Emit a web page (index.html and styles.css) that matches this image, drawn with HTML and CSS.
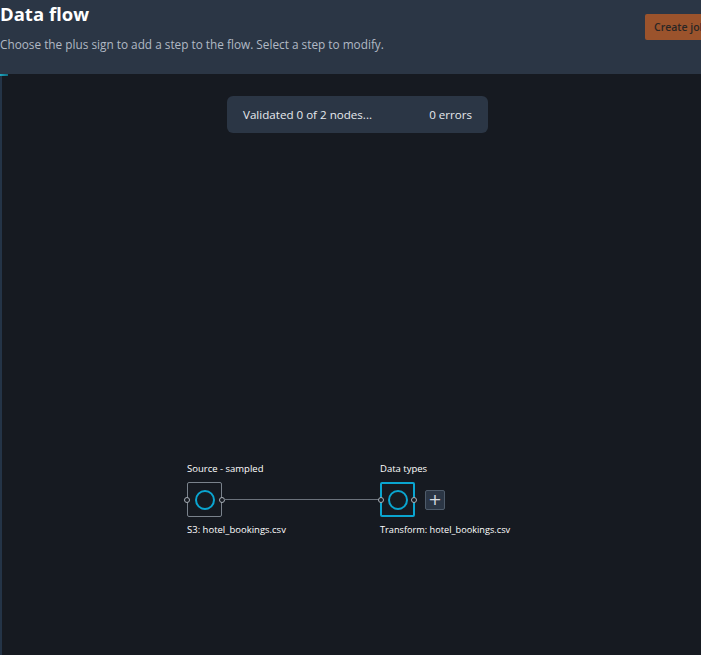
FILE: index.html
```html
<!DOCTYPE html>
<html>
<head>
<meta charset="utf-8">
<link rel="stylesheet" href="styles.css">
</head>
<body>
<div class="page">
  <header class="header">
    <div class="header-text">
      <h1 class="title">Data flow</h1>
      <p class="subtitle">Choose the plus sign to add a step to the flow. Select a step to modify.</p>
    </div>
    <button class="create-btn">Create job</button>
  </header>
  <main class="canvas">
    <div class="corner-mark"></div>
    <div class="validation">
      <span>Validated 0 of 2 nodes...</span>
      <span>0 errors</span>
    </div>

    <div class="node node-source">
      <div class="node-label">Source - sampled</div>
      <div class="node-box">
        <span class="port port-right"></span>
        <span class="port port-left"></span>
        <span class="ring"></span>
      </div>
      <div class="node-sub">S3: hotel_bookings.csv</div>
    </div>

    <div class="edge"></div>

    <div class="node node-transform">
      <div class="node-label">Data types</div>
      <div class="node-row">
        <div class="node-box selected">
          <span class="port port-left"></span>
          <span class="port port-right"></span>
          <span class="ring"></span>
        </div>
        <button class="add-btn">+</button>
      </div>
      <div class="node-sub">Transform: hotel_bookings.csv</div>
    </div>
  </main>
</div>
</body>
</html>
```

FILE: styles.css
```css
* { box-sizing: border-box; }
html, body {
  margin: 0;
  padding: 0;
  width: 701px;
  height: 655px;
  overflow: hidden;
  background: #161a21;
  font-family: "Open Sans", "Noto Sans", sans-serif;
}
.page {
  display: flex;
  flex-direction: column;
  height: 655px;
}
.header {
  height: 74px;
  background: #2b3645;
  display: flex;
  justify-content: space-between;
  align-items: flex-start;
  position: relative;
}
.title {
  margin: 0;
  padding-top: 1px;
  font-size: 18.5px;
  line-height: 25px;
  font-weight: 700;
  color: #ffffff;
}
.subtitle {
  margin: 10px 0 0 0;
  font-size: 11.8px;
  line-height: 16px;
  color: #b1b9c4;
}
.create-btn {
  margin-top: 14px;
  margin-right: -40px;
  height: 26px;
  width: 96px;
  padding: 0 0 0 9px;
  text-align: left;
  background: #9b532c;
  border: none;
  border-radius: 2px;
  color: #2a2625;
  font-family: "Open Sans", sans-serif;
  font-size: 10.5px;
  font-weight: 600;
}
.canvas {
  flex: 1;
  position: relative;
  border-left: 2px solid #243447;
}
.corner-mark {
  position: absolute;
  left: -2px;
  top: 0;
  width: 8px;
  height: 2px;
  background: linear-gradient(90deg, #1ea7c0, #0f6a80);
}
.validation {
  position: absolute;
  left: 225px;
  top: 22px;
  width: 261px;
  height: 37px;
  background: #2b3645;
  border-radius: 6px;
  display: flex;
  justify-content: space-between;
  align-items: center;
  padding: 0 16px;
  color: #e6e9ed;
  font-size: 11.6px;
}
.node {
  position: absolute;
  color: #ffffff;
  font-size: 9.5px;
}
.node-source { left: 185px; top: 388px; }
.node-transform { left: 378px; top: 388px; }
.node-transform .node-sub { font-size: 9.2px; }
.node-label { line-height: 14px; margin-bottom: 6px; }
.node-sub { line-height: 14px; margin-top: 6px; }
.node-row { display: flex; align-items: center; gap: 10px; }
.node-box {
  width: 35px;
  height: 35px;
  border: 1px solid #7a828c;
  border-radius: 2px;
  position: relative;
  display: flex;
  align-items: center;
  justify-content: center;
}
.node-box.selected {
  border: 2px solid #0aa5d0;
}
.ring {
  width: 20px;
  height: 20px;
  border-radius: 50%;
  border: 2.5px solid #0aa5d0;
}
.port {
  position: absolute;
  top: 50%;
  width: 6px;
  height: 6px;
  margin-top: -3px;
  border-radius: 50%;
  border: 1px solid #a9b0b8;
  background: #161a21;
}
.port-left { left: -4px; }
.port-right { right: -4px; }
.edge {
  position: absolute;
  left: 222px;
  top: 424.5px;
  width: 156px;
  height: 1px;
  background: #6b727c;
}
.add-btn {
  width: 20px;
  height: 20px;
  padding: 0;
  background: #2b3645;
  border: 1px solid #4e5b6a;
  border-radius: 2px;
  color: #d6dbe0;
  font-size: 16px;
  line-height: 16px;
  font-family: "DejaVu Sans", sans-serif;
}
```
